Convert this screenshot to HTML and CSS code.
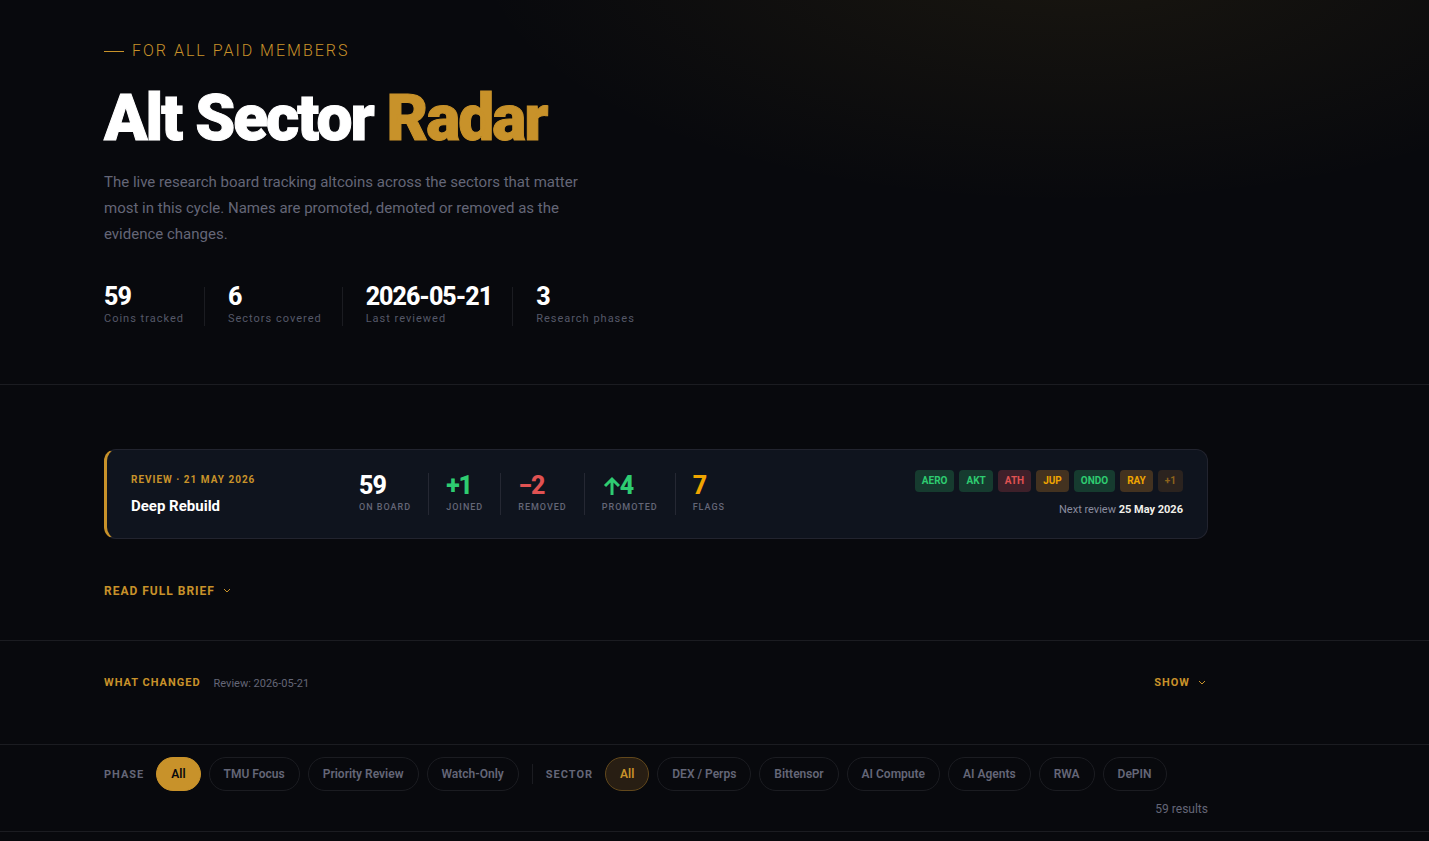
FILE: index.html
```html
<!DOCTYPE html>
<html lang="en">
<head>
    <meta charset="UTF-8">
    <meta name="viewport" content="width=device-width, initial-scale=1.0">
    <title>Alt Sector Radar</title>
    <link rel="stylesheet" href="styles.css">
</head>
<body>
    <header class="hero">
        <div class="container">
            <p class="eyebrow">For all paid members</p>
            <h1>Alt Sector <span>Radar</span></h1>
            <p class="intro">The live research board tracking altcoins across the sectors that matter most in this cycle. Names are promoted, demoted or removed as the evidence changes.</p>
            <div class="hero-stats">
                <div class="hero-stat"><strong>59</strong><span>Coins tracked</span></div>
                <div class="hero-stat"><strong>6</strong><span>Sectors covered</span></div>
                <div class="hero-stat"><strong>2026-05-21</strong><span>Last reviewed</span></div>
                <div class="hero-stat"><strong>3</strong><span>Research phases</span></div>
            </div>
        </div>
    </header>

    <main>
        <!-- Latest review -->
        <section class="brief">
            <div class="container">
                <div class="review-card">
                    <div class="review-title">
                        <p>Review · 21 May 2026</p>
                        <h2>Deep Rebuild</h2>
                    </div>
                    <div class="review-stats">
                        <div class="review-stat"><strong>59</strong><span>On board</span></div>
                        <div class="review-stat up"><strong>+1</strong><span>Joined</span></div>
                        <div class="review-stat down"><strong>−2</strong><span>Removed</span></div>
                        <div class="review-stat up">
                            <strong><svg class="arrow" viewBox="0 0 18 20" aria-hidden="true"><path d="M10 19V3M3 10l7-7 7 7"/></svg>4</strong>
                            <span>Promoted</span>
                        </div>
                        <div class="review-stat flag"><strong>7</strong><span>Flags</span></div>
                    </div>
                    <div class="review-side">
                        <div class="chips">
                            <span class="chip chip-green">AERO</span>
                            <span class="chip chip-green">AKT</span>
                            <span class="chip chip-red">ATH</span>
                            <span class="chip chip-amber">JUP</span>
                            <span class="chip chip-green">ONDO</span>
                            <span class="chip chip-amber">RAY</span>
                            <span class="chip chip-more">+1</span>
                        </div>
                        <p class="next-review">Next review <strong>25 May 2026</strong></p>
                    </div>
                </div>
                <button type="button" class="toggle">Read full brief
                    <svg class="chevron" viewBox="0 0 8 6" aria-hidden="true"><path d="M1 1l3 3 3-3"/></svg>
                </button>
            </div>
        </section>

        <!-- Change log -->
        <section class="changes">
            <div class="container changes-row">
                <h2>What changed</h2>
                <span class="changes-date">Review: 2026-05-21</span>
                <button type="button" class="toggle">Show
                    <svg class="chevron" viewBox="0 0 8 6" aria-hidden="true"><path d="M1 1l3 3 3-3"/></svg>
                </button>
            </div>
        </section>

        <!-- Filters -->
        <section class="filters">
            <div class="container filter-row">
                <div class="filter-group" role="group" aria-labelledby="phase-label">
                    <span class="filter-label" id="phase-label">Phase</span>
                    <button type="button" class="pill pill-solid">All</button>
                    <button type="button" class="pill">TMU Focus</button>
                    <button type="button" class="pill">Priority Review</button>
                    <button type="button" class="pill">Watch-Only</button>
                </div>
                <div class="filter-group" role="group" aria-labelledby="sector-label">
                    <span class="filter-label" id="sector-label">Sector</span>
                    <button type="button" class="pill pill-tint">All</button>
                    <button type="button" class="pill">DEX / Perps</button>
                    <button type="button" class="pill">Bittensor</button>
                    <button type="button" class="pill">AI Compute</button>
                    <button type="button" class="pill">AI Agents</button>
                    <button type="button" class="pill">RWA</button>
                    <button type="button" class="pill">DePIN</button>
                </div>
                <p class="results">59 results</p>
            </div>
        </section>
    </main>
</body>
</html>
```
FILE: styles.css
```css
* {
    margin: 0;
    padding: 0;
    box-sizing: border-box;
}

:root {
    --bg: #08090d;
    --line: #1b1c21;
    --gold: #c8922a;
    --muted: #646677;
    --green: #2ecc71;
    --red: #e05252;
    --amber: #f0a500;
}

body {
    font-family: Roboto, sans-serif;
    background-color: var(--bg);
    color: #fff;
}

button {
    font-family: inherit;
    background: none;
    border: none;
    cursor: pointer;
}

.container {
    max-width: 1104px;
    margin: 0 32px 0 104px;
}

/* Hero */
.hero {
    padding: 41px 0 58px;
    border-bottom: 1px solid var(--line);
    background: radial-gradient(ellipse 42% 66% at 75% -13%, rgba(200, 156, 42, 0.09), transparent);
}

.eyebrow {
    display: flex;
    align-items: center;
    gap: 8px;
    font-size: 16px;
    line-height: 20px;
    font-weight: 300;
    letter-spacing: 2px;
    text-transform: uppercase;
    color: var(--gold);
}

.eyebrow::before {
    content: "";
    width: 20px;
    height: 1px;
    background-color: var(--gold);
}

h1 {
    margin: 26px 0 18px;
    font-size: 64px;
    line-height: 64px;
    font-weight: 900;
    letter-spacing: -2px;
    -webkit-text-stroke: 1px currentColor;
}

h1 span {
    color: var(--gold);
}

.intro {
    max-width: 500px;
    font-size: 15px;
    line-height: 26px;
    color: var(--muted);
}

.hero-stats {
    display: flex;
    align-items: center;
    margin-top: 40px;
}

.hero-stat {
    display: flex;
    flex-direction: column;
}

.hero-stat + .hero-stat,
.review-stat + .review-stat {
    border-left: 1px solid var(--line);
}

.hero-stat + .hero-stat {
    padding-left: 23px;
    margin-left: 20px;
}

.hero-stat strong,
.review-stat strong {
    font-size: 25px;
    font-weight: 800;
    letter-spacing: -1px;
}

.hero-stat strong {
    line-height: 20px;
}

.hero-stat span {
    padding-top: 5px;
    font-size: 11px;
    line-height: 14px;
    letter-spacing: 1px;
    color: #555868;
}

/* Review card */
.brief {
    padding: 64px 0 39px;
    border-bottom: 1px solid var(--line);
}

.review-card {
    display: flex;
    align-items: center;
    min-height: 90px;
    padding: 20px 24px;
    background-color: #0f141e;
    border: 1px solid #22242f;
    border-left: 3px solid var(--gold);
    border-radius: 12px;
}

.review-title {
    width: 228px;
}

.review-title p {
    font-size: 10px;
    line-height: 16px;
    font-weight: 700;
    letter-spacing: 1px;
    text-transform: uppercase;
    color: var(--gold);
}

.review-title h2 {
    margin-top: 8px;
    font-size: 15px;
    line-height: 20px;
    font-weight: 700;
}

.review-stats {
    display: flex;
}

.review-stat {
    display: flex;
    flex-direction: column;
    padding: 0 17px;
}

.review-stat:first-child {
    padding-left: 0;
}

.review-stat + .review-stat {
    border-left-color: #252833;
}

.review-stat strong {
    display: flex;
    align-items: center;
    line-height: 26px;
}

.review-stat span {
    font-size: 9px;
    line-height: 16px;
    font-weight: 500;
    letter-spacing: 1px;
    text-transform: uppercase;
    color: var(--muted);
}

.up strong {
    color: var(--green);
}

.down strong {
    color: var(--red);
}

.flag strong {
    color: var(--amber);
}

.arrow {
    width: 18px;
    height: 20px;
    fill: none;
    stroke: currentColor;
    stroke-width: 3;
}

.review-side {
    margin-left: auto;
    text-align: right;
}

.chips {
    display: flex;
    justify-content: flex-end;
    gap: 5px;
}

.chip {
    padding: 0 7px;
    font-size: 10px;
    line-height: 22px;
    font-weight: 700;
    border-radius: 4px;
}

.chip-green {
    color: var(--green);
    background-color: #163b2f;
}

.chip-red {
    color: var(--red);
    background-color: #3e202a;
}

.chip-amber {
    color: var(--amber);
    background-color: #433220;
}

.chip-more {
    color: #8e641c;
    background-color: #2b231f;
}

.next-review {
    margin-top: 10px;
    font-size: 11px;
    line-height: 16px;
    color: #8a8c9e;
}

.next-review strong {
    color: #f2f0ea;
}

/* Expand buttons */
.toggle {
    display: inline-flex;
    align-items: center;
    gap: 8px;
    font-size: 12px;
    line-height: 20px;
    font-weight: 700;
    letter-spacing: 1px;
    text-transform: uppercase;
    color: var(--gold);
}

.brief .toggle {
    margin-top: 42px;
}

.chevron {
    width: 8px;
    height: 6px;
    fill: none;
    stroke: currentColor;
}

/* Change log */
.changes {
    padding: 32px 0 51px;
    border-bottom: 1px solid var(--line);
}

.changes-row {
    display: flex;
    align-items: center;
    gap: 13px;
}

.changes h2 {
    font-size: 11px;
    line-height: 20px;
    font-weight: 700;
    letter-spacing: 1px;
    text-transform: uppercase;
    color: var(--gold);
}

.changes-date {
    font-size: 11px;
    color: var(--muted);
}

.changes .toggle {
    margin-left: auto;
    padding-right: 2px;
    font-size: 11px;
}

/* Filters */
.filters {
    padding: 12px 0;
    border-bottom: 1px solid var(--line);
}

.filter-row,
.filter-group {
    display: flex;
    flex-wrap: wrap;
    align-items: center;
    gap: 8px;
}

.filter-row {
    column-gap: 10px;
}

.filter-group + .filter-group {
    position: relative;
    padding-left: 17px;
}

.filter-group + .filter-group::before {
    content: "";
    position: absolute;
    left: 3px;
    top: 7px;
    width: 1px;
    height: 20px;
    background-color: var(--line);
}

.filter-label {
    margin-right: 4px;
    font-size: 11px;
    font-weight: 700;
    letter-spacing: 1px;
    text-transform: uppercase;
    color: var(--muted);
}

.pill {
    height: 34px;
    padding: 0 14px;
    font-size: 12px;
    font-weight: 600;
    color: var(--muted);
    border: 1px solid var(--line);
    border-radius: 17px;
}

.pill-solid {
    color: #08090d;
    background-color: var(--gold);
    border-color: var(--gold);
}

.pill-tint {
    color: var(--gold);
    background-color: #281e13;
    border-color: #62481c;
}

.results {
    flex-basis: 100%;
    font-size: 12px;
    line-height: 20px;
    text-align: right;
    color: var(--muted);
}
```
